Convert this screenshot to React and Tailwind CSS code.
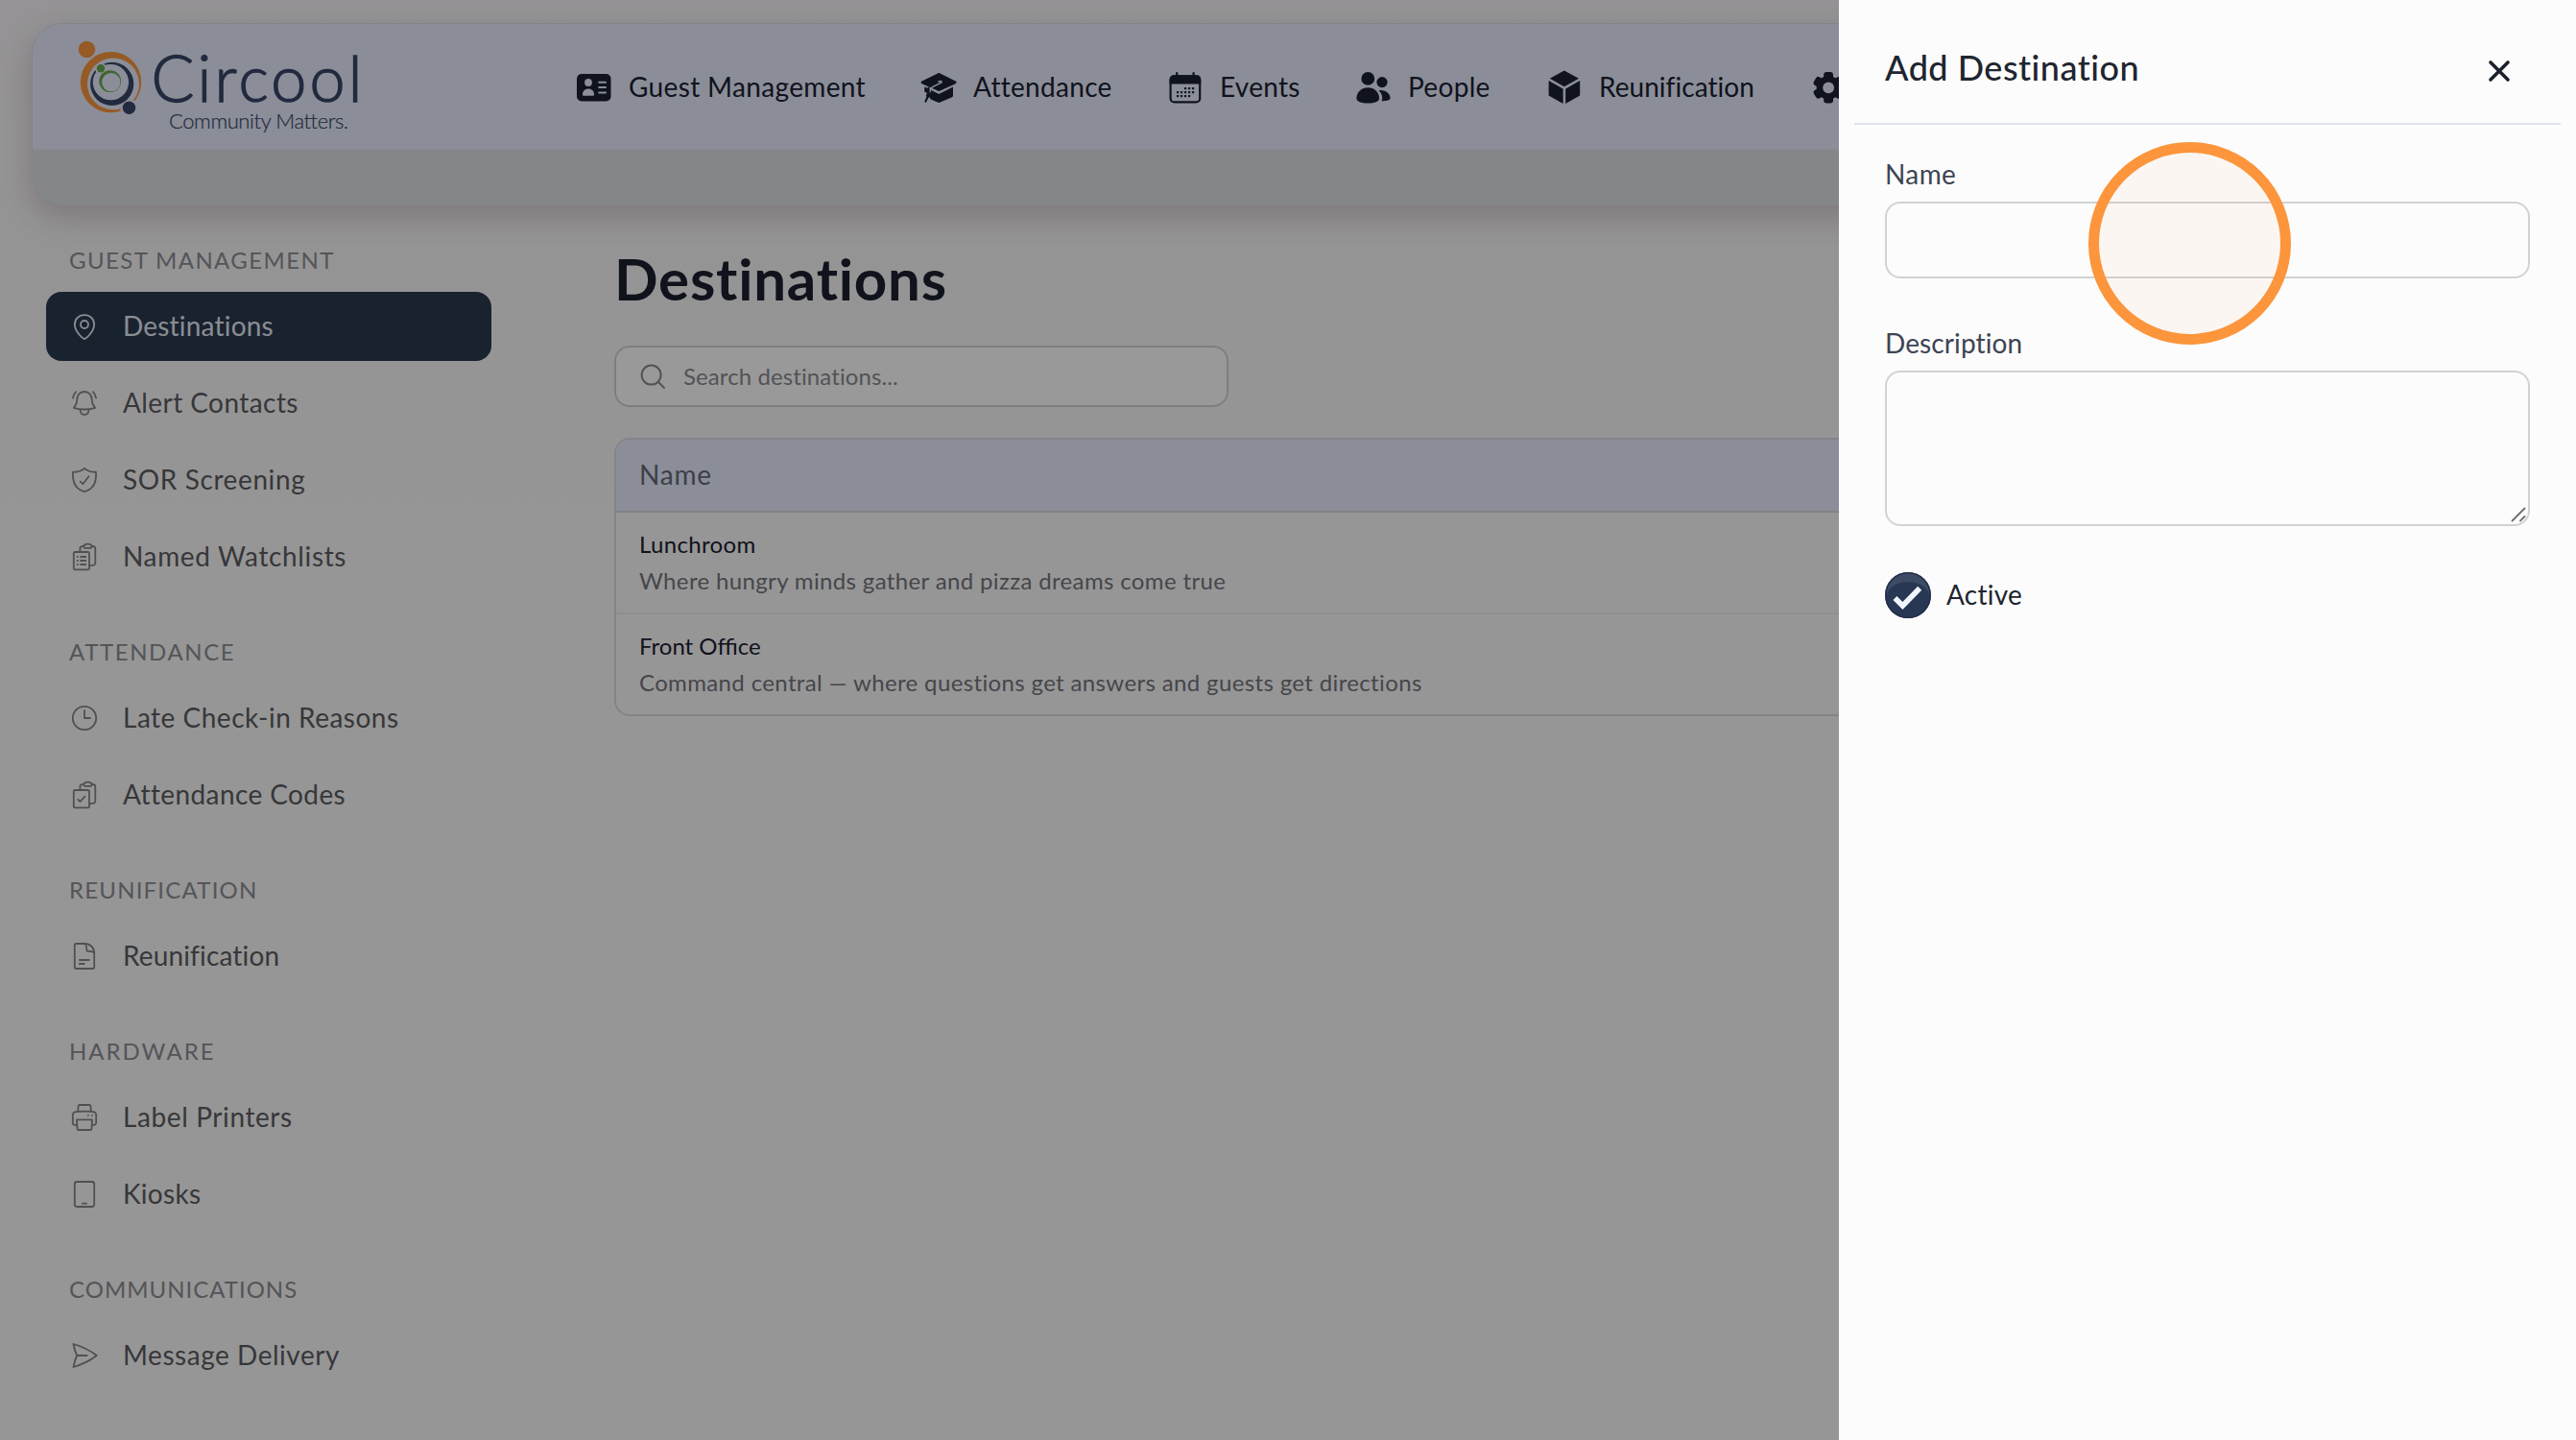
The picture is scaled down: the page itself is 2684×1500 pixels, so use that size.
import React from 'react';
import clsx from 'clsx';

const Icon = ({ children }) => (
  <svg
    viewBox="0 0 32 32"
    className="h-8 w-8 shrink-0"
    fill="none"
    stroke="currentColor"
    strokeWidth="1.8"
    strokeLinecap="round"
    strokeLinejoin="round"
  >
    {children}
  </svg>
);

const PinIcon = () => (
  <Icon>
    <path d="M16 29C14.5 29 5.9 21.5 5.9 13.9C5.9 8 10.2 4.1 16 4.1S26.1 8 26.1 13.9C26.1 21.5 17.5 29 16 29Z" />
    <circle cx="16" cy="14" r="4" />
  </Icon>
);

const BellIcon = () => (
  <Icon>
    <path d="M16 4C11.2 4 8.3 7.6 8.3 12.3C8.3 16.8 6.8 18.4 4.9 20.8C8 22 12 22.5 16 22.5S24 22 27.1 20.8C25.2 18.4 23.7 16.8 23.7 12.3C23.7 7.6 20.8 4 16 4Z" />
    <path d="M11.6 22.7C11.6 26 13.4 27.9 16 27.9S20.4 26 20.4 22.7" />
    <path d="M7.2 4.1C5.5 5.6 4.4 7.8 3.9 10.6M24.8 4.1C26.5 5.6 27.6 7.8 28.1 10.6" />
  </Icon>
);

const ShieldIcon = () => (
  <Icon>
    <path d="M16 3.8C13.2 6.5 9 7.7 4.1 7.7C3.2 17.8 6 25.4 16 28.2C26 25.4 28.8 17.8 27.9 7.7C23 7.7 18.8 6.5 16 3.8Z" />
    <path d="M11.7 17.6L14.3 20.2L20.5 12.3" />
  </Icon>
);

const Clipboards = ({ children }) => (
  <Icon>
    <path d="M11.4 10.4V7.2C11.4 5.6 12.4 4.9 15.2 4.9M23.8 4.9C26.6 4.9 27.3 5.8 27.3 7.4V22.6C27.3 24.6 26.4 25.2 22 25.2" />
    <path d="M15.2 4.9C15.8 3.4 17 2.7 19.5 2.7S23.2 3.4 23.8 4.9C23.8 6.4 23 6.8 21.6 6.8H17.4C16 6.8 15.2 6.4 15.2 4.9Z" />
    <rect x="4.8" y="11" width="16.2" height="18.3" rx="1.6" />
    {children}
  </Icon>
);

const WatchlistIcon = () => (
  <Clipboards>
    <path d="M8.6 16H8.9M8.6 20H8.9M8.6 24H8.9M12 16H17.4M12 20H17.4M12 24H17.4" />
  </Clipboards>
);

const CodesIcon = () => (
  <Clipboards>
    <path d="M9.2 20.8L11.5 23L16.5 17.6" />
  </Clipboards>
);

const ClockIcon = () => (
  <Icon>
    <circle cx="16" cy="16" r="12.2" />
    <path d="M16 8V16H22" />
  </Icon>
);

const DocumentIcon = () => (
  <Icon>
    <path d="M16 3H7.4C6.4 3 5.8 3.6 5.8 4.6V27.2C5.8 28.3 6.4 29 7.4 29H24.6C25.6 29 26.2 28.3 26.2 27.2V13C26.2 7 22 3 16 3Z" />
    <path d="M16.6 3C18.4 4.4 18 7.6 18.6 10.6C21.5 11.2 24.8 10.6 26.2 12.6" />
    <path d="M10.8 20H20.8M10.8 24H15.8" />
  </Icon>
);

const PrinterIcon = () => (
  <Icon>
    <path d="M9.2 9.4L9.6 4.2C9.7 3.4 10.1 3 10.9 3H21.1C21.9 3 22.3 3.4 22.4 4.2L22.8 9.4" />
    <path d="M8 24.2C4.6 24.2 3.8 23.6 3.8 21V13.4C3.8 10.4 5 9.6 16 9.6S28.2 10.4 28.2 13.4V21C28.2 23.6 27.4 24.2 24 24.2" />
    <path d="M8 18.4H24L23.5 27.6C23.4 28.6 22.9 29 22 29H10C9.1 29 8.6 28.6 8.5 27.6Z" />
    <path d="M19.8 13.8H20M24 13.8H24.2" />
  </Icon>
);

const KioskIcon = () => (
  <Icon>
    <rect x="5.8" y="3" width="20.4" height="26" rx="2.4" />
    <path d="M14 25.6H18" />
  </Icon>
);

const SendIcon = () => (
  <Icon>
    <path d="M4.5 4C13 6.5 21.5 10.5 28.8 16C21.5 21.5 13 25.5 4.5 28C5.2 23.8 6.4 19.8 8.2 16C6.4 12.2 5.2 8.2 4.5 4Z" />
    <path d="M8.2 16H18.6" />
  </Icon>
);

const NavIcon = ({ children }) => (
  <svg viewBox="0 0 40 40" className="h-10 w-10 shrink-0" fill="currentColor">
    {children}
  </svg>
);

const IdCardIcon = () => (
  <NavIcon>
    <rect x="3" y="6" width="35.5" height="28.4" rx="5" />
    <g className="fill-[#e8edfd]">
      <circle cx="15" cy="15" r="3.9" />
      <path d="M9 27.4C9 23.8 11.4 21.6 15 21.6S21 23.8 21 27.4C21 28.4 20.4 28.8 19.5 28.8H10.5C9.6 28.8 9 28.4 9 27.4Z" />
    </g>
    <path className="stroke-[#e8edfd]" strokeWidth="2" strokeLinecap="round" d="M26.2 14.8H33M26.2 20H33M26.2 25.4H33" />
  </NavIcon>
);

const GradCapIcon = () => (
  <NavIcon>
    <path d="M5.2 19.4L19.4 26.4C20 26.7 20.6 26.7 21.2 26.4L35 19.6V28.4C35 29.2 34.6 29.8 34 30.2L21.6 35.6C20.6 36 19.8 36 18.8 35.6L11.4 32.2L10.4 27.4L5.2 24.6Z" />
    <path d="M19 5.4C19.9 4.9 20.7 4.9 21.6 5.4L37.6 13.6C38.9 14.3 38.9 15.5 37.6 16.2L21.6 23.6C20.7 24 19.9 24 19 23.6L2.6 16.2C1.3 15.5 1.3 14.3 2.6 13.6Z" />
    <path className="stroke-[#e8edfd]" fill="none" strokeWidth="1.6" strokeLinecap="round" d="M20 14C22.6 12.8 24 14.4 22 15.4L13.6 19.6C11.4 20.8 11 22.4 10.8 25" />
    <path fill="none" stroke="currentColor" strokeWidth="2.2" strokeLinecap="round" d="M9.4 20.6V28.2L6.4 34.6" />
    <circle cx="9.4" cy="28.4" r="2.4" />
  </NavIcon>
);

const EVENT_DOTS = [
  [20, 21], [24, 21], [28, 21],
  [12, 25], [16, 25], [20, 25], [24, 25], [28, 25],
  [12, 29], [16, 29], [20, 29], [24, 29],
];

const CalendarIcon = () => (
  <NavIcon>
    <rect x="4.6" y="8.4" width="30.6" height="27" rx="4" fill="none" stroke="currentColor" strokeWidth="2.2" />
    <path d="M3.6 16.6V12C3.6 9.2 5.4 7.3 8 7.3H32C34.6 7.3 36.3 9.2 36.3 12V16.6Z" />
    <path stroke="currentColor" strokeWidth="2.2" strokeLinecap="round" d="M11.2 5V9M28.6 5V9" />
    {EVENT_DOTS.map(([x, y]) => (
      <rect key={`${x}-${y}`} x={x - 1} y={y - 1} width="2.2" height="2.2" rx="0.4" />
    ))}
  </NavIcon>
);

const PeopleIcon = () => (
  <NavIcon>
    <circle cx="14.3" cy="10.9" r="6.9" />
    <path d="M14.3 20.2C21 20.2 26 25 26 31.2C26 35 21.4 36.4 14.3 36.4S2.4 35 2.4 31.2C2.4 25 7.6 20.2 14.3 20.2Z" />
    <circle cx="29" cy="14.6" r="5.6" />
    <path d="M25.6 23.2C31.8 21.8 37.6 26.2 37.6 31C37.6 33.2 34 34.2 28.6 34.2C30 30.4 29 26.4 25.6 23.2Z" />
  </NavIcon>
);

const CubeIcon = () => (
  <NavIcon>
    <path d="M19.8 2.6L35 10.8L19.8 19.2L4.8 10.8Z" />
    <path d="M3.6 13L18.6 21.4V37L3.6 28.6Z" />
    <path d="M36.2 13L21.2 21.4V37L36.2 28.6Z" />
  </NavIcon>
);

const GearIcon = () => (
  <NavIcon>
    {[0, 60, 120].map((angle) => (
      <rect key={angle} x="15.2" y="4" width="9.8" height="32.6" rx="3" transform={`rotate(${angle} 20.1 20.3)`} />
    ))}
    <circle cx="20.1" cy="20.3" r="12.4" />
    <circle className="fill-[#e8edfd]" cx="20.1" cy="20.3" r="5.9" />
  </NavIcon>
);

const Logo = () => (
  <svg viewBox="78 36 304 108" className="h-[108px] w-[304px] shrink-0">
    <defs>
      <mask id="ring-outer">
        <rect x="70" y="30" width="100" height="110" fill="white" />
        <circle cx="118" cy="87.4" r="27" fill="black" />
        <circle cx="134.5" cy="112.3" r="9.4" fill="black" />
      </mask>
      <mask id="ring-middle">
        <rect x="70" y="30" width="100" height="110" fill="white" />
        <circle cx="115.4" cy="85.6" r="18.7" fill="black" />
        <circle cx="105" cy="71.2" r="6" fill="black" />
      </mask>
      <mask id="ring-inner">
        <rect x="70" y="30" width="100" height="110" fill="white" />
        <circle cx="115.8" cy="85.6" r="9.6" fill="black" />
      </mask>
    </defs>
    <circle cx="90.5" cy="51.5" r="8.7" fill="#f8963f" />
    <circle cx="115.5" cy="85.6" r="31.7" fill="#f8963f" mask="url(#ring-outer)" />
    <circle cx="116.7" cy="87.4" r="22.6" fill="#394669" mask="url(#ring-middle)" />
    <circle cx="134.5" cy="112.3" r="6.7" fill="#394669" />
    <circle cx="114.7" cy="84.6" r="11.4" fill="#69a850" mask="url(#ring-inner)" />
    <circle cx="105" cy="71.2" r="4.2" fill="#69a850" />
    <g fill="#394669" stroke="#394669" className="font-['Lato'] font-light">
      <text x="157.5" y="106.3" fontSize="66.5" strokeWidth="1.3" textLength="220">Circool</text>
      <text x="176" y="134.4" fontSize="22" strokeWidth="0.2" textLength="187">Community Matters.</text>
    </g>
  </svg>
);

const navItems = [
  { label: 'Guest Management', icon: IdCardIcon, style: 'w-[248px] pl-px tracking-[0.35px]' },
  { label: 'Attendance', icon: GradCapIcon, style: 'w-[145px] tracking-[0.3px]' },
  { label: 'Events', icon: CalendarIcon, style: 'w-[84px] tracking-[0.3px]' },
  { label: 'People', icon: PeopleIcon, style: 'w-[87px] tracking-[0.3px]' },
  { label: 'Reunification', icon: CubeIcon, style: 'w-[163px] tracking-[0.05px]' },
];

const sections = [
  {
    title: 'Guest Management',
    tracking: 'tracking-[1.4px]',
    items: [
      { label: 'Destinations', icon: PinIcon, tracking: 'tracking-[0.2px]', active: true },
      { label: 'Alert Contacts', icon: BellIcon, tracking: 'tracking-[0.43px]' },
      { label: 'SOR Screening', icon: ShieldIcon, tracking: 'tracking-[0.6px]' },
      { label: 'Named Watchlists', icon: WatchlistIcon, tracking: 'tracking-[0.64px]' },
    ],
  },
  {
    title: 'Attendance',
    tracking: 'tracking-[1.6px]',
    items: [
      { label: 'Late Check-in Reasons', icon: ClockIcon, tracking: 'tracking-[0.5px]' },
      { label: 'Attendance Codes', icon: CodesIcon, tracking: 'tracking-[0.4px]' },
    ],
  },
  {
    title: 'Reunification',
    tracking: 'tracking-[1.2px]',
    items: [{ label: 'Reunification', icon: DocumentIcon, tracking: 'tracking-[0.15px]' }],
  },
  {
    title: 'Hardware',
    tracking: 'tracking-[2px]',
    items: [
      { label: 'Label Printers', icon: PrinterIcon, tracking: 'tracking-[0.6px]' },
      { label: 'Kiosks', icon: KioskIcon, tracking: 'tracking-[0.3px]' },
    ],
  },
  {
    title: 'Communications',
    tracking: 'tracking-[1px]',
    items: [{ label: 'Message Delivery', icon: SendIcon, tracking: 'tracking-[0.53px]' }],
  },
];

const destinations = [
  {
    name: 'Lunchroom',
    tracking: 'tracking-[0.35px]',
    description: 'Where hungry minds gather and pizza dreams come true',
  },
  {
    name: 'Front Office',
    tracking: 'tracking-normal',
    description: 'Command central — where questions get answers and guests get directions',
  },
];

const Header = () => (
  <header className="mx-[33px] h-[190px] shrink-0 overflow-hidden rounded-[32px] border border-[#dadde5] bg-[#dee0e7] shadow-[0_12px_32px_rgba(60,40,48,0.22)]">
    <div className="flex h-[131px] items-start bg-[#e8edfd] text-[#1b2132]">
      <div className="ml-11 mt-[11px] w-[520px]">
        <Logo />
      </div>
      <nav className="mt-[46px] flex gap-14">
        {navItems.map(({ label, icon: NavItemIcon, style }) => (
          <a key={label} className="flex items-center gap-4 whitespace-nowrap text-[28px] leading-10">
            <NavItemIcon />
            <span className={clsx('-mt-0.5', style)}>{label}</span>
          </a>
        ))}
        <GearIcon />
      </nav>
    </div>
  </header>
);

const Sidebar = () => (
  <aside className="ml-12 w-[464px] shrink-0 pt-[41px]">
    {sections.map((section) => (
      <div key={section.title} className="mb-[47px]">
        <h2 className={clsx('mb-[17px] pl-6 text-2xl leading-8 font-normal text-[#8d8e94] uppercase', section.tracking)}>
          {section.title}
        </h2>
        <ul className="flex flex-col gap-2">
          {section.items.map(({ label, icon: ItemIcon, tracking, active }) => (
            <li
              key={label}
              className={clsx(
                'flex h-[72px] items-center gap-6 rounded-2xl px-6 text-[28px]',
                active ? 'bg-[#2a394f] text-[#e6ebf5]' : 'text-[#85868b]'
              )}
            >
              <ItemIcon />
              <span className={clsx('-mt-[3px]', tracking, !active && 'text-[#5c5d62]')}>{label}</span>
            </li>
          ))}
        </ul>
      </div>
    ))}
  </aside>
);

const DestinationsTable = () => (
  <div className="mt-8 overflow-hidden rounded-2xl border-2 border-[#dbdde4] bg-[#fbfbfc]">
    <div className="flex h-[76px] items-center border-b-2 border-[#d8dae2] bg-[#e8edfd] px-6 pb-0.5 text-[28px] tracking-[0.8px] text-[#666a78]">
      Name
    </div>
    {destinations.map((item, index) => (
      <div key={item.name} className={clsx('px-6 py-3.5 text-2xl', index === 0 && 'border-b-2 border-[#eeeff2]')}>
        <p className={clsx('leading-[38px] text-[#1b2030]', item.tracking)}>{item.name}</p>
        <p className="leading-[38px] tracking-[0.36px] text-[#75767c]">{item.description}</p>
      </div>
    ))}
  </div>
);

const Destinations = () => (
  <main className="ml-32 mr-12 flex-1 pt-10">
    <h1 className="text-[60px] leading-[72px] font-bold tracking-[0.8px] text-[#1b2030]">Destinations</h1>
    <div className="mt-[34px] flex h-16 w-[640px] items-center rounded-2xl border-2 border-[#d2d3d6] bg-white px-6 text-[#8a8b8f]">
      <svg viewBox="0 0 28 28" className="mr-[18px] h-7 w-7" fill="none" stroke="currentColor" strokeWidth="2" strokeLinecap="round">
        <circle cx="12.6" cy="12.6" r="10" />
        <path d="M19.8 19.8L26 26" />
      </svg>
      <span className="text-2xl tracking-[0.1px]">Search destinations...</span>
    </div>
    <DestinationsTable />
  </main>
);

const AddDestinationPanel = () => (
  <section className="absolute inset-y-0 right-0 w-[768px] bg-[#fcfcfc]">
    <div className="mx-4 flex h-[130px] items-start justify-between border-b-2 border-[#dfe2ea] pt-12 pr-[52px] pl-8">
      <h2 className="text-4xl leading-[44px] font-medium tracking-[0.5px] text-[#20252f]">Add Destination</h2>
      <svg viewBox="0 0 24 24" className="mt-3.5 h-6 w-6 text-[#1c212c]" fill="none" stroke="currentColor" strokeWidth="3.6" strokeLinecap="round">
        <path d="M3 3L21 21M21 3L3 21" />
      </svg>
    </div>
    <form className="px-12 pt-[31px] text-[28px] text-[#3d4453]">
      <label className="mb-[9px] block leading-10 tracking-[0.4px]">Name</label>
      <div className="h-20 rounded-2xl border-2 border-[#d1d2d2]" />
      <label className="mt-[47px] mb-[9px] block leading-10 tracking-[0.1px]">Description</label>
      <div className="flex h-[162px] items-end justify-end rounded-2xl border-2 border-[#d1d2d2]">
        <svg viewBox="0 0 18 18" className="h-[18px] w-[18px]" fill="none" stroke="#6f6f6f" strokeWidth="1.8">
          <path d="M1 15L15 1M9.5 15L15 9.5" />
        </svg>
      </div>
      <label className="mt-12 flex items-center gap-4 text-[#20252f]">
        <svg viewBox="0 0 48 48" className="h-12 w-12">
          <circle cx="24" cy="24" r="24" fill="#3d4b64" />
          <path d="M1.5 32.4C-1 19 9 10.2 24 10.2S49 19 46.5 32.4A24 24 0 0 1 1.5 32.4Z" fill="#283753" />
          <circle cx="24" cy="24" r="23.2" fill="none" stroke="#24304a" strokeWidth="1.4" />
          <path d="M10.4 27L18.4 35L36.2 16.8" fill="none" stroke="#f1f5fd" strokeWidth="5.6" />
        </svg>
        <span className="-mt-0.5 leading-10 tracking-[0.25px]">Active</span>
      </label>
    </form>
  </section>
);

const App = () => {
  return (
    <div className="relative flex h-[1500px] w-[2684px] flex-col overflow-hidden bg-[#fafafa] bg-linear-to-b from-[#f8f5f8] to-[#fafafa] to-40% pt-6 font-['Lato','Open_Sans',sans-serif]">
      <Header />
      <div className="flex">
        <Sidebar />
        <Destinations />
      </div>

      {/* Backdrop */}
      <div className="absolute inset-0 bg-black/40" />
      <AddDestinationPanel />

      {/* Click marker */}
      <div className="absolute top-[148px] left-[2176px] h-[211px] w-[211px] rounded-full border-[11px] border-[#fc953b] bg-[#fb8a45]/5" />
    </div>
  );
};

export default App;
